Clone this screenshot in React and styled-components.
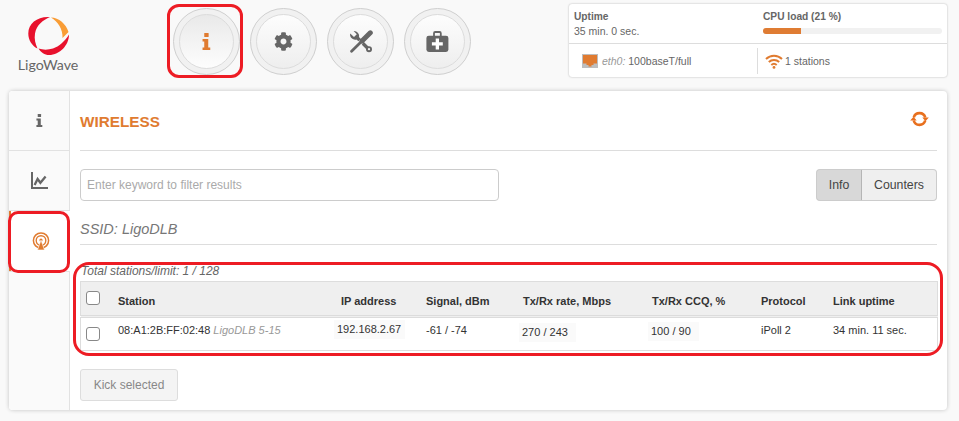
import React from 'react';
import styled, { createGlobalStyle } from 'styled-components';
import { FaCog } from 'react-icons/fa';

const Global = createGlobalStyle`
  html, body { margin: 0; padding: 0; background: #f9f9f9; }
  body { font-family: "Liberation Sans", Arial, sans-serif; font-size: 11px; color: #333; }
`;

const Page = styled.div`
  position: relative;
  width: 959px;
  height: 421px;
  overflow: hidden;
  background: #f9f9f9;
`;
const Header = styled.header`
  display: flex;
  height: 91px;
  box-sizing: border-box;
  padding: 4px 12px 0 18px;
`;
const LogoBlock = styled.div`
  width: 62px;
  display: flex;
  flex-direction: column;
  align-items: center;
  padding-top: 10px;
`;
const LogoName = styled.span`
  font-family: Lato, sans-serif;
  font-size: 14.2px;
  line-height: 18px;
  margin-right: 2px;
  color: #666;
  white-space: nowrap;
`;
const NavButtons = styled.nav`
  display: flex;
  gap: 10px;
  margin: 4px 0 0 93px;
`;
const RoundButton = styled.div`
  width: 67px;
  height: 67px;
  box-sizing: border-box;
  border-radius: 50%;
  border: 1px solid #cfcfcf;
  background: #f1f1f1;
  display: flex;
  align-items: center;
  justify-content: center;
`;
const RoundInner = styled.div`
  width: 55px;
  height: 55px;
  box-sizing: border-box;
  border-radius: 50%;
  border: 1px solid #dcdcdc;
  display: flex;
  align-items: center;
  justify-content: center;
  color: ${p => (p.$active ? '#e07b30' : '#666')};
  background: ${p => (p.$active
    ? 'linear-gradient(#e9e9e9, #fdfdfd)'
    : 'linear-gradient(#fdfdfd, #eeeeee)')};
  font-size: 19px;
`;
const StatusPanel = styled.section`
  margin-left: auto;
  width: 378px;
  height: 73px;
  box-sizing: border-box;
  background: #fff;
  border-radius: 3px;
  box-shadow: 0 0 2px rgba(0,0,0,.3);
  display: flex;
  flex-direction: column;
`;
const StatusTop = styled.div`
  display: flex;
  height: 40px;
  box-sizing: border-box;
  padding: 5px 5px 0 5px;
  border-bottom: 1px solid #ddd;
  color: #666;
  font-size: 10.5px;
`;
const StatusCol = styled.div`
  width: ${p => p.$w}px;
  line-height: 15px;
  flex: none;
`;
const StatusLabel = styled.div`
  font-weight: bold;
  font-size: 10.2px;
  color: #666;
`;
const CpuTrack = styled.div`
  width: 179px;
  height: 6px;
  margin-top: 4px;
  background: #f1f1f1;
  border-radius: 3px;
  overflow: hidden;
`;
const CpuFill = styled.div`
  height: 100%;
  background: #df7c33;
`;
const StatusBottom = styled.div`
  flex: 1;
  display: flex;
  align-items: center;
  font-size: 10.5px;
  color: #666;
`;
const StatusCell = styled.div`
  display: flex;
  align-items: center;
  height: 26px;
  box-sizing: border-box;
  width: ${p => p.$w}px;
  padding-left: ${p => p.$pad}px;
  border-right: ${p => (p.$sep ? '1px solid #ddd' : 'none')};
  gap: ${p => p.$gap}px;
`;
const Muted = styled.em`
  color: #999;
`;
const PortIcon = styled.div`
  width: 16px;
  height: 14px;
  background: #bdbdbd;
  display: flex;
`;
const Card = styled.main`
  display: flex;
  margin-left: 9px;
  width: 938px;
  height: 319px;
  background: #fff;
  border-radius: 4px;
  box-shadow: 0 0 4px rgba(0,0,0,.22);
  overflow: hidden;
`;
const Sidebar = styled.aside`
  width: 61px;
  flex: none;
  display: flex;
  flex-direction: column;
  background: #fff;
`;
const SideItem = styled.div`
  height: ${p => p.$h}px;
  box-sizing: border-box;
  display: flex;
  align-items: center;
  justify-content: center;
  padding-left: ${p => p.$inset || 0}px;
  color: ${p => (p.$active ? '#e07b30' : '#666')};
  background: ${p => (p.$active ? '#fff' : '#fafafa')};
  border-left: ${p => (p.$active ? '2px solid #e07b30' : 'none')};
  border-right: ${p => (p.$active ? 'none' : '1px solid #e2e2e2')};
  border-bottom: ${p => (p.$active ? 'none' : '1px solid #e2e2e2')};
`;
const SideFill = styled.div`
  flex: 1;
  background: #fafafa;
  border-right: 1px solid #e2e2e2;
  border-top: 1px solid #e2e2e2;
`;
const Content = styled.div`
  flex: 1;
  padding: 0 10px;
  min-width: 0;
  display: flex;
  flex-direction: column;
`;
const TitleRow = styled.div`
  height: 60px;
  box-sizing: border-box;
  display: flex;
  align-items: center;
  justify-content: space-between;
  border-bottom: 1px solid #ddd;
  padding-right: 8px;
`;
const Title = styled.h1`
  margin: 0;
  padding-top: 2px;
  font-size: 15.3px;
  font-weight: bold;
  color: #e07b30;
`;
const Refresh = styled.span`
  display: flex;
  position: relative;
  top: -2px;
`;
const FilterRow = styled.div`
  display: flex;
  justify-content: space-between;
  margin-top: 18px;
`;
const Filter = styled.input`
  width: 419px;
  height: 32px;
  box-sizing: border-box;
  border: 1px solid #ccc;
  border-radius: 4px;
  padding: 0 6px;
  font: 12px "Liberation Sans", Arial, sans-serif;
  background: #fff;
  &::placeholder { color: #aaa; opacity: 1; }
`;
const Segments = styled.div`
  display: flex;
  height: 32px;
`;
const Segment = styled.button`
  height: 32px;
  box-sizing: border-box;
  width: ${p => p.$w}px;
  padding: 0;
  font: 12.3px "Liberation Sans", Arial, sans-serif;
  color: #444;
  border: 1px solid #ccc;
  background: ${p => (p.$active ? '#d8d8d8' : '#efefef')};
  border-left-width: ${p => (p.$active ? 1 : 0)}px;
  border-right-color: ${p => (p.$active ? '#b5b5b5' : '#ccc')};
  border-radius: ${p => (p.$active ? '4px 0 0 4px' : '0 4px 4px 0')};
`;
const Ssid = styled.div`
  margin-top: 20px;
  height: 23px;
  border-bottom: 1px solid #ddd;
  font-size: 14.5px;
  font-style: italic;
  color: #777;
`;
const Total = styled.div`
  margin-top: 20px;
  font-size: 12px;
  font-style: italic;
  line-height: 13px;
  color: #666;
  padding-left: 1px;
`;
const Table = styled.table`
  width: 857px;
  margin-top: 3px;
  border-collapse: collapse;
  table-layout: fixed;
  border: 1px solid #ddd;
  font-size: 11px;
  color: #333;
`;
const HeadCell = styled.th`
  height: 35px;
  box-sizing: border-box;
  background: #efefef;
  border-bottom: 3px double #dcdcdc;
  text-align: left;
  padding: 5px 0 0 ${p => p.$pad || 0}px;
  font-weight: bold;
  white-space: nowrap;
`;
const Cell = styled.td`
  height: 34px;
  box-sizing: border-box;
  padding: 0 0 ${p => p.$raise || 0}px ${p => p.$pad || 0}px;
  white-space: nowrap;
  vertical-align: middle;
`;
const Shaded = styled.span`
  display: inline-block;
  background: #fafafa;
  padding: 3px ${p => p.$right || 4}px 4px 3px;
`;
const CheckCell = styled.span`
  display: block;
  width: 12px;
  height: 12px;
  margin-left: 5px;
  border: 1px solid #888;
  border-radius: 3px;
  background: #fff;
  position: relative;
  top: ${p => p.$top}px;
`;
const Device = styled.em`
  color: #999;
  margin-left: 3px;
`;
const Kick = styled.button`
  align-self: flex-start;
  width: 98px;
  height: 32px;
  margin-top: 18px;
  box-sizing: border-box;
  border: 1px solid #ddd;
  border-radius: 3px;
  background: #f4f4f4;
  color: #888;
  font: 12px "Liberation Sans", Arial, sans-serif;
`;
const Annotation = styled.div`
  position: absolute;
  left: ${p => p.$x}px;
  top: ${p => p.$y}px;
  width: ${p => p.$w}px;
  height: ${p => p.$h}px;
  box-sizing: border-box;
  border: 3px solid #ed1c24;
  border-radius: ${p => p.$r}px;
  pointer-events: none;
`;

const Logo = () => (
  <svg width="42" height="42" viewBox="0 0 42 42">
    <path d="M22 3C10 2 .3 9 .3 19.5C.3 26 4 32 9.5 34.5C7.5 30 6 25 7 19.5C8.5 11 15 6 22 3Z" fill="#e8112d" />
    <path d="M23 3.5C31 3.5 38 10 40.5 18L34.5 24C35 15 30 8 23 3.5Z" fill="#f99d36" />
    <path d="M41 20.5C41 31 32 41 21 41C16.5 41 13 38.5 10.5 34.5C15 36 20 36 25 34.5C31 32.5 37 27 41 20.5Z" fill="#e8112d" />
  </svg>
);
const InfoGlyph = ({ h }) => (
  <svg width={h * 0.5} height={h} viewBox="0 0 8 17" fill="currentColor">
    <rect x="2" y="0" width="4.4" height="4" rx=".5" />
    <path d="M.3 6H6V14.4H8V17H.3V14.4H2V8.6H.3Z" />
  </svg>
);
const ToolsGlyph = () => (
  <svg width="24" height="23" viewBox="0 0 24 23" fill="none">
    <path d="M7 6.5L20 19.5" stroke="#666" strokeWidth="3.4" />
    <path d="M1.2 3.6A5 5 0 0 0 7.6 9.4L10 7A5 5 0 0 0 4.6 1L7.8 4.2L5 7Z" fill="#666" />
    <circle cx="20" cy="19.2" r="3" fill="#666" />
    <circle cx="20" cy="19.2" r="1.1" fill="#f4f4f4" />
    <path d="M12.5 11.5L3 21" stroke="#f6f6f6" strokeWidth="4.6" />
    <path d="M21.3 2.8L13 11" stroke="#666" strokeWidth="5" strokeLinecap="round" />
    <path d="M13 11L2.6 21.2" stroke="#666" strokeWidth="2.8" strokeLinecap="round" />
  </svg>
);
const MedkitGlyph = () => (
  <svg width="23" height="22" viewBox="0 0 23 22">
    <path d="M8 5V2.2A1.2 1.2 0 0 1 9.2 1H13.6A1.2 1.2 0 0 1 14.8 2.2V5" fill="none" stroke="#666" strokeWidth="1.8" />
    <rect x=".4" y="4.7" width="22" height="16.3" rx="2.4" fill="#666" />
    <path d="M9.7 7.5H13V11.3H16.8V14.6H13V18.4H9.7V14.6H5.9V11.3H9.7Z" fill="#fff" />
  </svg>
);
const ChartGlyph = () => (
  <svg width="17" height="17" viewBox="0 0 17 17" fill="none" stroke="#666">
    <path d="M1 0V16H17" strokeWidth="2" />
    <path d="M3.6 13L6.6 7L9.4 10.8L14.6 4.6" strokeWidth="2.3" />
  </svg>
);
const Antenna = () => (
  <svg width="18" height="18" viewBox="0 0 18 18" fill="none" stroke="#e07b30">
    <circle cx="9" cy="8.5" r="7.6" strokeWidth="1.5" />
    <circle cx="9" cy="8.5" r="4.8" strokeWidth="1.4" />
    <circle cx="9" cy="8" r="1.6" fill="#e07b30" stroke="none" />
    <path d="M9 8L5.5 18H12.5Z" fill="#e07b30" stroke="#fff" strokeWidth=".6" />
  </svg>
);
const RefreshGlyph = () => (
  <svg width="19" height="16" viewBox="0 0 19 16" fill="none" stroke="#e8701e" strokeWidth="2.6">
    <path d="M3.8 6.3A6 6 0 0 1 15.3 6.5" />
    <path d="M15.2 9.7A6 6 0 0 1 3.7 9.5" />
    <path d="M12.3 6.5H18.8L15.5 10.3Z" fill="#e8701e" stroke="none" />
    <path d="M.2 9.5H6.7L3.5 5.7Z" fill="#e8701e" stroke="none" />
  </svg>
);
const WifiGlyph = () => (
  <svg width="18" height="16" viewBox="0 0 18 16" fill="none" stroke="#e07b30" strokeWidth="2">
    <path d="M1 6A11.5 11.5 0 0 1 17 6" />
    <path d="M3.8 9A7.5 7.5 0 0 1 14.2 9" />
    <path d="M6.3 12A4 4 0 0 1 11.7 12" />
    <circle cx="9" cy="14.4" r="1.4" fill="#e07b30" stroke="none" />
  </svg>
);
const Port = () => (
  <svg width="16" height="14" viewBox="0 0 16 14">
    <path d="M1 1H15V9.5H11.5V11H9.5V12.5H6.5V11H4.5V9.5H1Z" fill="#e07b30" />
  </svg>
);

const columns = [28, 216, 92, 92, 129, 109, 72, 119];

export default function App() {
  return (
    <Page>
      <Global />
      <Header>
        <LogoBlock>
          <Logo />
          <LogoName>LigoWave</LogoName>
        </LogoBlock>
        <NavButtons>
          <RoundButton><RoundInner $active><InfoGlyph h={17} /></RoundInner></RoundButton>
          <RoundButton><RoundInner><FaCog /></RoundInner></RoundButton>
          <RoundButton><RoundInner><ToolsGlyph /></RoundInner></RoundButton>
          <RoundButton><RoundInner><MedkitGlyph /></RoundInner></RoundButton>
        </NavButtons>
        <StatusPanel>
          <StatusTop>
            <StatusCol $w={189}>
              <StatusLabel>Uptime</StatusLabel>
              35 min. 0 sec.
            </StatusCol>
            <StatusCol $w={179}>
              <StatusLabel>CPU load (21 %)</StatusLabel>
              <CpuTrack><CpuFill style={{ width: '21%' }} /></CpuTrack>
            </StatusCol>
          </StatusTop>
          <StatusBottom>
            <StatusCell $w={189} $pad={13} $gap={4} $sep>
              <PortIcon><Port /></PortIcon>
              <span><Muted>eth0:</Muted> 100baseT/full</span>
            </StatusCell>
            <StatusCell $w={188} $pad={7} $gap={2}>
              <WifiGlyph />
              <span>1 stations</span>
            </StatusCell>
          </StatusBottom>
        </StatusPanel>
      </Header>
      <Card>
        <Sidebar>
          <SideItem $h={60} $inset={1}><InfoGlyph h={13} /></SideItem>
          <SideItem $h={60}><ChartGlyph /></SideItem>
          <SideItem $h={60} $active><Antenna /></SideItem>
          <SideFill />
        </Sidebar>
        <Content>
          <TitleRow>
            <Title>WIRELESS</Title>
            <Refresh><RefreshGlyph /></Refresh>
          </TitleRow>
          <FilterRow>
            <Filter placeholder="Enter keyword to filter results" />
            <Segments>
              <Segment $w={46} $active>Info</Segment>
              <Segment $w={75}>Counters</Segment>
            </Segments>
          </FilterRow>
          <Ssid>SSID: LigoDLB</Ssid>
          <Total>Total stations/limit: 1 / 128</Total>
          <Table>
            <colgroup>
              {columns.map((w, i) => <col key={i} style={{ width: w }} />)}
            </colgroup>
            <thead>
              <tr>
                <HeadCell><CheckCell $top={-3} /></HeadCell>
                <HeadCell $pad={9.5}>Station</HeadCell>
                <HeadCell $pad={16.5}>IP address</HeadCell>
                <HeadCell $pad={9.5}>Signal, dBm</HeadCell>
                <HeadCell $pad={14.5}>Tx/Rx rate, Mbps</HeadCell>
                <HeadCell $pad={14.5}>Tx/Rx CCQ, %</HeadCell>
                <HeadCell $pad={14.5}>Protocol</HeadCell>
                <HeadCell $pad={14.5}>Link uptime</HeadCell>
              </tr>
            </thead>
            <tbody>
              <tr>
                <Cell><CheckCell $top={0} /></Cell>
                <Cell $pad={9.5} $raise={8}>08:A1:2B:FF:02:48<Device>LigoDLB 5-15</Device></Cell>
                <Cell $pad={9.5} $raise={9}><Shaded $right={4}>192.168.2.67</Shaded></Cell>
                <Cell $pad={9.5} $raise={8}>-61 / -74</Cell>
                <Cell $pad={10.5} $raise={3}><Shaded $right={8}>270 / 243</Shaded></Cell>
                <Cell $pad={10.5} $raise={6}><Shaded $right={8}>100 / 90</Shaded></Cell>
                <Cell $pad={14.5} $raise={8}>iPoll 2</Cell>
                <Cell $pad={14.5} $raise={8}>34 min. 11 sec.</Cell>
              </tr>
            </tbody>
          </Table>
          <Kick>Kick selected</Kick>
        </Content>
      </Card>
      <Annotation $x={167} $y={4} $w={76} $h={74} $r={12} />
      <Annotation $x={8} $y={211} $w={62} $h={62} $r={10} />
      <Annotation $x={73} $y={262} $w={870} $h={94} $r={16} />
    </Page>
  );
}
